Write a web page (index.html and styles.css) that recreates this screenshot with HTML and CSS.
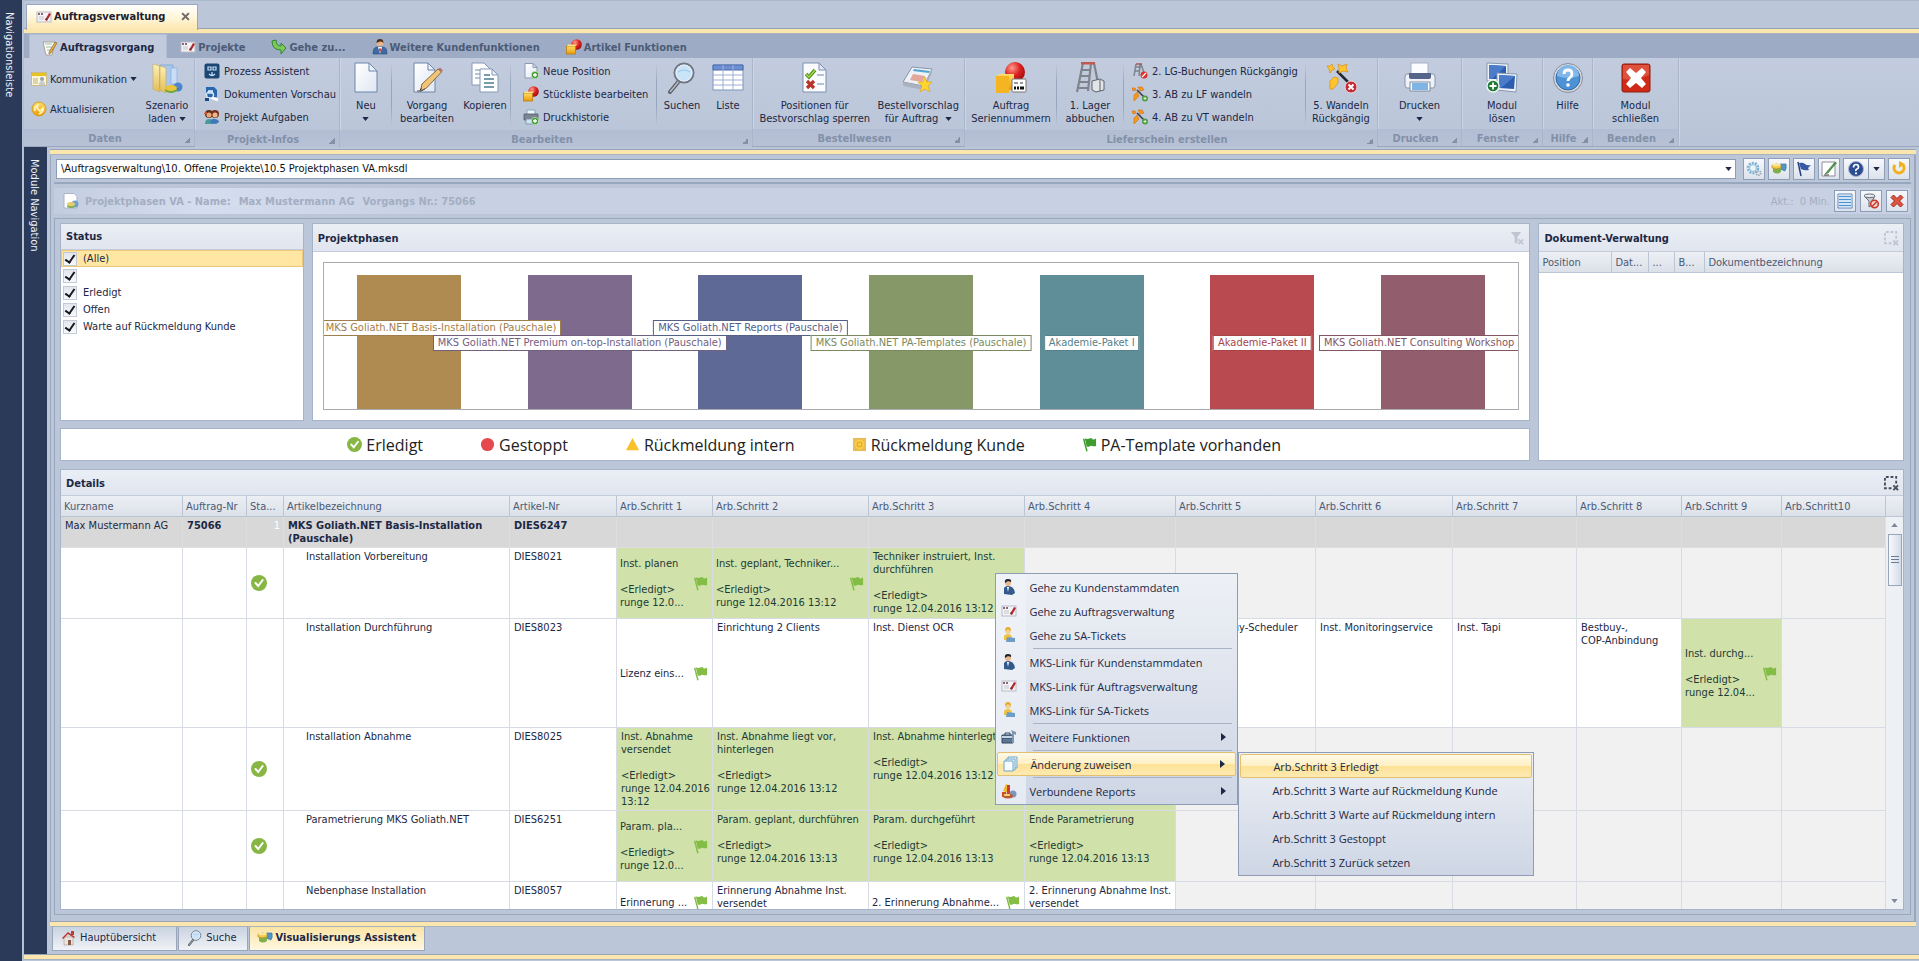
FILE: index.html
```html
<!doctype html>
<html lang="de">
  <head>
    <meta charset="UTF-8" />
    <title>Auftragsverwaltung</title>
    <link rel="stylesheet" href="styles.css">
  </head>
  <body>
    <svg class="sprite" aria-hidden="true">
      <defs>
        <linearGradient id="gold" x1="0" y1="0" x2="0" y2="1"><stop offset="0" stop-color="#ffdf6a" /><stop offset="1" stop-color="#eb9a06" /></linearGradient>
        <linearGradient id="paper" x1="0" y1="0" x2="1" y2="1"><stop offset="0" stop-color="#fff" /><stop offset="1" stop-color="#dfe7f3" /></linearGradient>
        <linearGradient id="folder" x1="0" y1="0" x2="0" y2="1"><stop offset="0" stop-color="#fdf0b4" /><stop offset="1" stop-color="#e2bd58" /></linearGradient>
        <radialGradient id="ball" cx=".35" cy=".3" r=".8"><stop offset="0" stop-color="#ff9a8a" /><stop offset=".5" stop-color="#dc2222" /><stop offset="1" stop-color="#9c0a0a" /></radialGradient>
      </defs>

      <symbol id="i-card" viewBox="0 0 16 16">
        <rect x="1" y="3" width="14" height="10" fill="#f4f4f6" stroke="#b9bcc6" />
        <path d="M2 4h2v2H2zM5 4h2v2H5z" fill="#8a6a72" /><path d="M3 8h5M3 10h5" stroke="#c2c5d0" />
        <path d="M9 11l4-7 2 1-4 7z" fill="#b3262b" /><path d="M9 11l1-2 1 1z" fill="#333" />
      </symbol>
      <symbol id="i-edit" viewBox="0 0 16 16">
        <path d="M1 2l12 0-3 13-6 0z" fill="#fff" stroke="#a9a38c" /><path d="M3 4h7M4 7h6M5 10h4" stroke="#9bb8a0" />
        <path d="M7 12l6-10 2 1-6 10-2 1z" fill="#e6a93a" stroke="#7a6330" stroke-width=".6" />
      </symbol>
      <symbol id="i-goto" viewBox="0 0 16 16">
        <path d="M1 2l4-1q0 6 5 6V4l5 5-5 6v-4Q1 11 1 2z" fill="#7cc95a" stroke="#2f8a2c" />
      </symbol>
      <symbol id="i-person" viewBox="0 0 16 16">
        <circle cx="8" cy="4" r="3.400" fill="#e9b48a" /><path d="M4.500 4q0-4 3.500-4t3.500 4Q10 2 8 2.500T4.500 4z" fill="#4a2c1c" />
        <path d="M1 15q0-7 4-7h6q4 0 4 7z" fill="#3d6aa5" stroke="#274a7c" stroke-width=".6" /><path d="M6 8h4l-2 7z" fill="#fff" /><path d="M8 8.500l1 2-1 4-1-4z" fill="#c52a2a" />
      </symbol>
      <symbol id="i-shapes" viewBox="0 0 16 16">
        <circle cx="10.500" cy="5.500" r="5.300" fill="url(#ball)" /><rect x=".5" y="7" width="9" height="8" fill="url(#gold)" stroke="#b97d0c" stroke-width=".8" />
        <path d="M.5 7l2-1.500h9L9.500 7z" fill="#ffe48b" />
      </symbol>
      <symbol id="i-mail" viewBox="0 0 16 16">
        <rect x=".5" y="1.500" width="15" height="13" fill="#fdf7d5" stroke="#b9a35a" stroke-width=".6" /><rect x="1" y="2" width="14" height="3" fill="#e8c223" />
        <path d="M2 8h5M2 10h5M2 12h5" stroke="#b7b190" /><circle cx="11" cy="8" r="2" fill="#9aa0ad" /><path d="M8 14q0-4 3-4t3 4z" fill="#c7cbd4" />
      </symbol>
      <symbol id="i-refresh" viewBox="0 0 16 16">
        <circle cx="8" cy="8" r="7" fill="url(#gold)" stroke="#d2a31a" /><path d="M4 10q-1-5 3-6L6 7l3 3 3-3q1 4-4 6" fill="none" stroke="#fff6c8" stroke-width="1.600" />
      </symbol>
      <symbol id="i-scenario" viewBox="0 0 32 32">
        <path d="M2 2l7 2v26l-7-3z" fill="url(#folder)" stroke="#c9a94d" stroke-width=".6" /><path d="M9 3h13v24H9z" fill="#a8c8ee" stroke="#6f98cc" stroke-width=".6" />
        <path d="M9 4l6 2v25l-6-3z" fill="url(#folder)" stroke="#c9a94d" stroke-width=".6" /><path d="M20 6h6v16h-6z" fill="#c9ddf5" stroke="#86a9d8" stroke-width=".6" />
        <circle cx="27" cy="25" r="4.500" fill="#4d86cf" /><path d="M22 21a8 5 0 0 0 8 6h-8z" fill="#2d5fae" /><ellipse cx="20" cy="28" rx="6" ry="3" fill="#6cab3a" /><ellipse cx="20" cy="26" rx="6" ry="3" fill="#eac53c" />
      </symbol>
      <symbol id="i-process" viewBox="0 0 16 16">
        <rect x=".5" y=".5" width="15" height="15" rx="2" fill="#1d4673" /><path d="M4 4h3v3H4zM9 4h3v3H9zM8 9v3M5 11q3 3 6 0" fill="none" stroke="#c5e2fa" stroke-width="1.200" />
      </symbol>
      <symbol id="i-preview" viewBox="0 0 16 16">
        <path d="M2 1h8l3 3v7H2z" fill="#2a66ab" /><path d="M4 4h5v4H4z" fill="#a9cdf0" /><circle cx="6" cy="9" r="3.500" fill="none" stroke="#dce9f7" stroke-width="1.500" /><path d="M8 12l6 2" stroke="#fff" stroke-width="2.500" /><path d="M1 12h4v3H1z" fill="#184a83" />
      </symbol>
      <symbol id="i-tasks" viewBox="0 0 16 16">
        <circle cx="5" cy="5" r="4" fill="#5d3019" /><circle cx="11" cy="5" r="4" fill="#7b2e1b" /><circle cx="5" cy="6" r="2.500" fill="#e8a97a" /><circle cx="11" cy="6" r="2.500" fill="#eab88f" />
        <path d="M1 15q0-5 4-5t5 5z" fill="#4a9a9c" /><path d="M6 14q1-5 5-4t4 3l-3 2z" fill="#3c78b5" /><path d="M0 4l3-1v2H0z" fill="#d3572a" />
      </symbol>
      <symbol id="i-page" viewBox="0 0 32 32">
        <path d="M5 1h14l8 8v21H5z" fill="url(#paper)" stroke="#6d86ab" /><path d="M19 1v8h8z" fill="#e9f0fa" stroke="#6d86ab" />
      </symbol>
      <symbol id="i-pageedit" viewBox="0 0 32 32">
        <path d="M3 1h14l7 7v22H3z" fill="url(#paper)" stroke="#6d86ab" /><path d="M17 1v7h7z" fill="#e9f0fa" stroke="#6d86ab" />
        <path d="M11 22L27 7l3.500 3-15 16-6 3z" fill="#efc57a" stroke="#8c6a3a" /><path d="M27 7l2-1.500 3 3-1.500 1.500z" fill="#b9736a" /><path d="M8 29l2-1 1-3z" fill="#333" /><path d="M6 29q4 1 8-2" fill="none" stroke="#555" />
      </symbol>
      <symbol id="i-copy" viewBox="0 0 32 32">
        <path d="M3 1h12l6 6v16H3z" fill="#fff" stroke="#8698b5" /><path d="M6 8h9M6 12h9M6 16h9" stroke="#6b93a4" />
        <path d="M11 7h12l6 6v17H11z" fill="#fff" stroke="#8698b5" /><path d="M23 7v6h6z" fill="#e9f0fa" stroke="#8698b5" /><path d="M15 13h6M15 17h10M15 21h10M15 25h10" stroke="#4b7d93" stroke-width="1.400" />
      </symbol>
      <symbol id="i-newpos" viewBox="0 0 16 16">
        <path d="M2 .5h8l4 4V15H2z" fill="url(#paper)" stroke="#8a9ab3" /><path d="M10 .5v4h4z" fill="#dfe6f0" stroke="#8a9ab3" />
        <circle cx="12" cy="12" r="3.700" fill="#3f9a2f" stroke="#e8f5e2" stroke-width=".6" /><path d="M12 10v4M10 12h4" stroke="#fff" stroke-width="1.300" />
      </symbol>
      <symbol id="i-history" viewBox="0 0 16 16">
        <path d="M4 1h8v5H4z" fill="#eef6fc" stroke="#6f9cc0" stroke-width=".8" /><path d="M1 5h14v6H1z" fill="#7c8594" stroke="#525b6b" stroke-width=".8" /><path d="M3 10h9v5H3z" fill="#cfe3f3" stroke="#6f8ba5" stroke-width=".8" />
        <circle cx="12" cy="12" r="3.700" fill="#3f9a2f" stroke="#e8f5e2" stroke-width=".6" /><path d="M12 10v4M10 12h4" stroke="#fff" stroke-width="1.300" />
      </symbol>
      <symbol id="i-search" viewBox="0 0 32 32">
        <path d="M13 19L4 30" stroke="#5b5f68" stroke-width="4" stroke-linecap="round" /><path d="M13 19L4 30" stroke="#b8bcc6" stroke-width="1.500" /><circle cx="18" cy="11" r="9.500" fill="#c9e3f8" stroke="#6f7683" stroke-width="2" /><circle cx="18" cy="11" r="8" fill="none" stroke="#e9eef5" stroke-width="1.200" /><path d="M12 10q6-4 12 0" stroke="#93c9ee" fill="none" />
      </symbol>
      <symbol id="i-list" viewBox="0 0 32 32">
        <path d="M1 3h30v25H1z" fill="#fff" stroke="#7d92bd" /><path d="M1 3h30v5H1z" fill="#6f8fd4" stroke="#4b6ab0" /><path d="M1 13h30M1 18h30M1 23h30M11 3v25M21 3v25" stroke="#9db0d3" />
      </symbol>
      <symbol id="i-check-doc" viewBox="0 0 32 32">
        <path d="M4 1h16l7 7v22H4z" fill="#f9fbff" stroke="#7d8fae" /><path d="M20 1v7h7z" fill="#dfe8f5" stroke="#7d8fae" /><path d="M18 13h7M18 22h7" stroke="#6f87b0" />
        <path d="M7 12l3 3 6-7" fill="none" stroke="#4f8d1a" stroke-width="3.500" /><path d="M7 12l3 3 6-7" fill="none" stroke="#a2d84e" stroke-width="1.500" /><path d="M8 19l7 7M15 19l-7 7" stroke="#b8342a" stroke-width="3.200" />
      </symbol>
      <symbol id="i-order" viewBox="0 0 32 32">
        <path d="M10 5l20 2-8 17L1 20z" fill="#eef1f6" stroke="#8b94a5" /><path d="M1 20l21 4 8-17v4l-8 17L1 24z" fill="#aab2c0" /><path d="M12 7l16 2-1 2-16-2z" fill="#52a5d4" /><path d="M11 12l12 2-3 6-12-2z" fill="#e4a79c" />
        <path d="M23 15l2 5 5 0-4 4 2 6-5-3-5 3 2-6-4-4 5 0z" fill="#ffd52e" stroke="#e39d11" stroke-width=".6" />
      </symbol>
      <symbol id="i-serial" viewBox="0 0 32 32">
        <circle cx="20" cy="10" r="10" fill="url(#ball)" /><path d="M1 14l4-2h14v16H1z" fill="url(#gold)" /><path d="M1 14h13v17H1z" fill="#f5b523" />
        <rect x="17" y="17" width="14" height="13" rx="1" fill="#fff" stroke="#777" /><path d="M19 21h4M25 21h3" stroke="#333" /><path d="M19 26h2M22 26h2M25 26h4" stroke="#111" stroke-width="3" />
      </symbol>
      <symbol id="i-ladder" viewBox="0 0 32 32">
        <path d="M9 1L3 30M17 1l-3 28M9 1h12M8 8h8M7 14h8M6 20h9M5 26h9M20 1l5 25" fill="none" stroke="#7f838b" stroke-width="2.200" /><path d="M7 1h14" stroke="#c05a50" stroke-width="3" />
        <path d="M18 19l8-2 4 2v9l-8 2-4-2z" fill="#e2e4e8" stroke="#5d626c" /><path d="M26 18v11" stroke="#5d626c" />
      </symbol>
      <symbol id="i-ladder-no" viewBox="0 0 16 16">
        <path d="M4 1L2 13M8 1L7 13M4 4h5M3 8h5M9 1l3 9" fill="none" stroke="#7f838b" stroke-width="1.500" /><path d="M4 1h6" stroke="#a05a58" stroke-width="1.500" />
        <circle cx="12" cy="12" r="3.500" fill="#d8322c" /><path d="M10 14l4-4" stroke="#fff" stroke-width="1.300" />
      </symbol>
      <symbol id="i-wand" viewBox="0 0 16 16">
        <path d="M5 4l8 8" stroke="#3b3b45" stroke-width="1.600" /><path d="M6 1l4 0 2 3-4 1zM0 2l3 0 1 2-3 1zM2 9l3-3 2 4-5 5z" fill="#f39a1c" stroke="#cf6d10" stroke-width=".6" /><circle cx="13" cy="12.500" r="3" fill="#4f9d43" /><path d="M11.500 12.500h3M13 11v3" stroke="#d9f0d2" />
      </symbol>
      <symbol id="i-wand-undo" viewBox="0 0 32 32">
        <path d="M12 9l14 14" stroke="#25252d" stroke-width="2.500" /><path d="M2 4l3 0 2-2 1 3 2 2-3 1-2 3-1-4zM13 2l4 2 5-2-1 4 2 4-5-1-4 2 0-5zM5 19l4-4 4 1 0 5-5 6-3 0 0-4z" fill="#ffc52b" stroke="#d98e12" stroke-width=".7" />
        <circle cx="26" cy="25" r="6" fill="#c52a36" stroke="#f0dada" /><path d="M23.500 22.500l5 5M28.500 22.500l-5 5" stroke="#fff" stroke-width="2" />
      </symbol>
      <symbol id="i-printer" viewBox="0 0 32 32">
        <path d="M3 12h26q2 0 2 3v8q0 3-2 3H3q-2 0-2-3v-8q0-3 2-3z" fill="#eef1f7" stroke="#8b95a8" /><path d="M7 1h17v12H7z" fill="#fafcff" stroke="#a7b0c2" /><path d="M5 11h22v4q0 2-3 2H8q-3 0-3-2z" fill="#55658a" /><path d="M6 20h20v9H6z" fill="#fff" stroke="#7f8aa0" /><path d="M8 21h16v7H8z" fill="#7eb5e4" />
      </symbol>
      <symbol id="i-window" viewBox="0 0 32 32">
        <path d="M1 1l21 1v17H1z" fill="#eef3fa" stroke="#8797b0" /><path d="M3 3l17 1v13H3z" fill="#2a5cb0" /><path d="M3 3l17 1-14 13H3z" fill="#4a7cca" /><path d="M11 11l20 1-1 18-19-2z" fill="#eef3fa" stroke="#8797b0" /><path d="M13 13l16 1-1 13-15-1z" fill="#2a5cb0" /><path d="M13 13l16 1-14 12h-2z" fill="#4a7cca" />
        <circle cx="7" cy="24" r="6" fill="#1f7a33" stroke="#f2faf2" stroke-width="1.300" /><path d="M7 20.500v7M3.500 24h7" stroke="#fff" stroke-width="1.800" />
      </symbol>
      <symbol id="i-help" viewBox="0 0 32 32">
        <circle cx="16" cy="16" r="14.500" fill="#d6d9de" stroke="#868c97" /><circle cx="16" cy="16" r="12" fill="#4e92d6" stroke="#2e67a8" /><path d="M5 14a11 11 0 0 1 22 0q-11 4-22 0z" fill="#82b7ea" />
        <path d="M12 12q0-4 4-4t4 4q0 2-2 3.500T16 19" fill="none" stroke="#fff" stroke-width="2.800" /><circle cx="16" cy="23" r="1.800" fill="#fff" />
      </symbol>
      <symbol id="i-close" viewBox="0 0 32 32">
        <rect x="2" y="2" width="28" height="28" rx="2" fill="#cf2a17" stroke="#8e1c10" /><path d="M3 3h26v10q-14 6-26 4z" fill="#e4634e" opacity=".7" /><path d="M10 6l6 5 6-5 4 4-5 6 5 6-4 4-6-5-6 5-4-4 5-6-5-6z" fill="#fff" />
      </symbol>
      <symbol id="i-gear" viewBox="0 0 16 16">
        <circle cx="7" cy="7" r="5" fill="none" stroke="#7fb3d4" stroke-width="2.600" stroke-dasharray="2 1.100" /><circle cx="7" cy="7" r="3.500" fill="#e8f3fa" stroke="#8cbcd8" /><circle cx="12.500" cy="12" r="2.200" fill="none" stroke="#9aa8b8" stroke-width="1.800" stroke-dasharray="1.300 .8" />
      </symbol>
      <symbol id="i-visual" viewBox="0 0 16 16">
        <path d="M9 3h6q1 4-1 7l-5-2z" fill="#4f95c7" stroke="#2e6f9f" stroke-width=".6" /><path d="M2 7v4q4 3 8 0V7z" fill="#7fb04c" /><path d="M1 4q5-2 9 0v3q-5 2-9 0z" fill="#f2c94a" stroke="#ab8521" stroke-width=".6" /><ellipse cx="5.500" cy="4" rx="4.500" ry="1.200" fill="#fbe79a" />
      </symbol>
      <symbol id="i-flagblue" viewBox="0 0 16 16">
        <path d="M2 1l3 14" stroke="#27407c" stroke-width="1.500" /><path d="M3 2q4-1 6 1t6 1l-3 3 1 2q-4 1-8-1z" fill="#3859a6" />
      </symbol>
      <symbol id="i-note" viewBox="0 0 16 16">
        <path d="M1 1h13v14H1z" fill="#fff" stroke="#8b8f99" /><path d="M4 13L14 1l1.500 1L7 12z" fill="#4f9a4a" stroke="#2e6a30" stroke-width=".5" /><path d="M3 14h5" stroke="#444" />
      </symbol>
      <symbol id="i-question" viewBox="0 0 16 16">
        <circle cx="8" cy="8" r="7.500" fill="#2c4c93" stroke="#aab4c9" /><path d="M5.500 6.500q0-3 2.500-3t2.500 2.500q0 1.500-1.500 2T8 10" fill="none" stroke="#fff" stroke-width="1.700" /><circle cx="8" cy="12.300" r="1.100" fill="#fff" />
      </symbol>
      <symbol id="i-reload" viewBox="0 0 16 16">
        <path d="M4 4a5 5 0 1 0 8 0" fill="none" stroke="#f2b01e" stroke-width="3" /><path d="M8 0v7l6-4z" fill="#f2b01e" />
      </symbol>
      <symbol id="i-report" viewBox="0 0 16 16">
        <path d="M1 .5h10l3 3V15H1z" fill="#fff" stroke="#aab3c3" /><circle cx="12" cy="11" r="3.500" fill="#6e9fd4" /><ellipse cx="8" cy="13" rx="4" ry="2" fill="#82b05a" /><ellipse cx="8" cy="11" rx="4" ry="2" fill="#e4cd6a" />
      </symbol>
      <symbol id="i-rows" viewBox="0 0 16 16">
        <path d="M1 1h14v14H1z" fill="#fff" stroke="#5a86bd" /><path d="M2 3.500h12M2 6.500h12M2 9.500h12M2 12.500h12" stroke="#4f92d2" stroke-width="1.700" />
      </symbol>
      <symbol id="i-nofilter" viewBox="0 0 16 16">
        <path d="M1 3l5 5v6l3-2V8l3-5z" fill="#c6cad0" stroke="#666c78" /><ellipse cx="6.500" cy="2.800" rx="5.500" ry="1.800" fill="#eceef2" stroke="#666c78" /><circle cx="11.500" cy="11" r="3.800" fill="#f6d0ca" stroke="#c8362a" stroke-width="1.500" /><path d="M9 13.500l5-5" stroke="#c8362a" stroke-width="1.500" />
      </symbol>
      <symbol id="i-redx" viewBox="0 0 16 16">
        <path d="M4.500 2L8 5.500 11.500 2 14 4.500 10.500 8l3.500 3.500-2.500 2.500L8 10.500 4.500 14 2 11.500 5.500 8 2 4.500z" fill="#e0533f" stroke="#9c2a1d" />
      </symbol>
      <symbol id="i-x" viewBox="0 0 16 16"><path d="M2 2l12 12M14 2L2 14" stroke="currentColor" stroke-width="3.600" /></symbol>
      <symbol id="i-funnel" viewBox="0 0 16 16"><path d="M1 1h11L8 6v7H5V6z" fill="currentColor" /><path d="M9 9l5 5M14 9l-5 5" stroke="currentColor" stroke-width="1.800" /></symbol>
      <symbol id="i-select" viewBox="0 0 16 16"><path d="M8 13H1V1h12v7" fill="none" stroke="currentColor" stroke-width="2" stroke-dasharray="3 2" /><path d="M10 10l5 5M15 10l-5 5" stroke="currentColor" stroke-width="2" /></symbol>
      <symbol id="i-down" viewBox="0 0 8 5"><path d="M0 0h8L4 5z" fill="currentColor" /></symbol>
      <symbol id="i-up" viewBox="0 0 8 5"><path d="M0 5h8L4 0z" fill="currentColor" /></symbol>
      <symbol id="i-right" viewBox="0 0 5 8"><path d="M0 0v8l5-4z" fill="currentColor" /></symbol>
      <symbol id="i-done" viewBox="0 0 16 16"><circle cx="8" cy="8" r="8" fill="#87b644" /><path d="M4.500 8l2.700 3 4.500-6" fill="none" stroke="#fff" stroke-width="2" stroke-linecap="round" /></symbol>
      <symbol id="i-stop" viewBox="0 0 16 16"><circle cx="8" cy="8" r="7" fill="#e5484d" /></symbol>
      <symbol id="i-warn" viewBox="0 0 16 16"><path d="M8 1l7 13H1z" fill="#f8c02a" /></symbol>
      <symbol id="i-customer" viewBox="0 0 16 16"><path d="M1 1h14v14H1z" fill="#e9bd55" /><circle cx="8" cy="8" r="5" fill="#fbd23f" /><circle cx="8" cy="8" r="2.500" fill="none" stroke="#e8a83c" stroke-width="1.500" /></symbol>
      <symbol id="i-flag" viewBox="0 0 16 16"><path d="M1 2l1.500-.5L6 15l-1.500.5z" fill="currentColor" /><path d="M3 1.500q3 1 5 0t3 .5 4-.5v8q-2 .5-4 0t-3 .5-3 0z" fill="currentColor" /></symbol>
      <symbol id="i-user" viewBox="0 0 16 16"><circle cx="7" cy="4" r="3" fill="#e8b78e" /><path d="M4 4q-1-4 3-4t3 3L7 2z" fill="#1f2530" /><path d="M3 15V9q1-2 4-2 6 0 7 7l-3 2z" fill="#31598c" /><path d="M6 8h2l-1 5z" fill="#fff" /></symbol>
      <symbol id="i-support" viewBox="0 0 16 16"><circle cx="7" cy="4" r="2.800" fill="#f1cf8e" /><path d="M4 4q0-4 3-4t3 4L7 2z" fill="#e7a91e" /><path d="M3 13V9q1-2 4-2 3 0 4 3v4z" fill="#f0c244" /><path d="M6 10l8 1v4H5z" fill="#6c9dc8" /></symbol>
      <symbol id="i-tools" viewBox="0 0 16 16"><path d="M1 6h11v8H1z" fill="#5c7794" stroke="#33475e" /><path d="M4 6V4h5v2M1 9h11" fill="none" stroke="#33475e" /><path d="M1 7h11v2H1z" fill="#c4d3e2" /><path d="M10 1l5 2v3l-2-1v9h-2V4z" fill="#7f98b2" /></symbol>
      <symbol id="i-stack" viewBox="0 0 16 16"><path d="M6 1h9v11H6z" fill="#eaf4fb" stroke="#6fa6c9" /><path d="M4 3h9v11H4z" fill="#eaf4fb" stroke="#6fa6c9" /><path d="M2 5h9v10H2z" fill="#f7fbfe" stroke="#6fa6c9" /></symbol>
      <symbol id="i-chart" viewBox="0 0 16 16"><path d="M2 8l3-7 2 1v8z" fill="#f0b72c" /><path d="M6 2h3v9H6z" fill="#d13b2e" /><circle cx="12" cy="11" r="3.500" fill="#7f95b8" /><path d="M1 9h4v5H1z" fill="#cf4a2e" /><ellipse cx="7" cy="13" rx="5" ry="2.500" fill="#b55a3a" /><path d="M3 11h6v2H3z" fill="#f3cf65" /></symbol>
      <symbol id="i-home" viewBox="0 0 16 16"><path d="M3 7h9v8H3z" fill="#e9e4e0" stroke="#a79a92" stroke-width=".6" /><path d="M1 8l6-6 7 5-1 1-6-4-5 5z" fill="#c0332c" /><path d="M10 1h3v4h-3z" fill="#b5442f" /><path d="M7 10h3v5H7z" fill="#8a5a44" /></symbol>
    </svg>

    <div class="app">
      <aside class="side-strip nav-strip">Navigationsleiste</aside>

      <div class="workspace">
        <header class="doc-tabs">
          <div class="doc-tab">
            <svg class="ico"><use href="#i-card" /></svg>
            <span>Auftragsverwaltung</span>
            <button class="doc-close" aria-label="Schließen"><svg><use href="#i-x" /></svg></button>
          </div>
        </header>
        <div class="accent"></div>

        <nav class="ribbon-tabs">
          <button class="ribbon-tab active"><svg class="ico"><use href="#i-edit" /></svg>Auftragsvorgang</button>
          <button class="ribbon-tab"><svg class="ico"><use href="#i-card" /></svg>Projekte</button>
          <button class="ribbon-tab"><svg class="ico"><use href="#i-goto" /></svg>Gehe zu...</button>
          <button class="ribbon-tab"><svg class="ico"><use href="#i-person" /></svg>Weitere Kundenfunktionen</button>
          <button class="ribbon-tab"><svg class="ico"><use href="#i-shapes" /></svg>Artikel Funktionen</button>
        </nav>

        <div class="ribbon">
          <section class="group g-daten">
            <div class="group-body">
              <div class="stack two">
                <button class="small"><svg class="ico"><use href="#i-mail" /></svg>Kommunikation <svg class="caret"><use href="#i-down" /></svg></button>
                <button class="small"><svg class="ico"><use href="#i-refresh" /></svg>Aktualisieren</button>
              </div>
              <button class="big"><svg class="ico-big"><use href="#i-scenario" /></svg><span>Szenario<br>laden <svg class="caret"><use href="#i-down" /></svg></span></button>
            </div>
            <h3 class="group-title">Daten</h3>
          </section>
          <section class="group g-infos">
            <div class="group-body">
              <div class="stack">
                <button class="small"><svg class="ico"><use href="#i-process" /></svg>Prozess Assistent</button>
                <button class="small"><svg class="ico"><use href="#i-preview" /></svg>Dokumenten Vorschau</button>
                <button class="small"><svg class="ico"><use href="#i-tasks" /></svg>Projekt Aufgaben</button>
              </div>
            </div>
            <h3 class="group-title">Projekt-Infos</h3>
          </section>
          <section class="group g-bearbeiten">
            <div class="group-body">
              <button class="big w48"><svg class="ico-big"><use href="#i-page" /></svg><span>Neu<br><svg class="caret"><use href="#i-down" /></svg></span></button>
              <i class="divider"></i>
              <button class="big w68"><svg class="ico-big"><use href="#i-pageedit" /></svg><span>Vorgang<br>bearbeiten</span></button>
              <button class="big w48"><svg class="ico-big"><use href="#i-copy" /></svg><span>Kopieren</span></button>
              <i class="divider"></i>
              <div class="stack">
                <button class="small"><svg class="ico"><use href="#i-newpos" /></svg>Neue Position</button>
                <button class="small"><svg class="ico"><use href="#i-shapes" /></svg>Stückliste bearbeiten</button>
                <button class="small"><svg class="ico"><use href="#i-history" /></svg>Druckhistorie</button>
              </div>
              <i class="divider"></i>
              <button class="big w48"><svg class="ico-big"><use href="#i-search" /></svg><span>Suchen</span></button>
              <button class="big"><svg class="ico-big"><use href="#i-list" /></svg><span>Liste</span></button>
            </div>
            <h3 class="group-title">Bearbeiten</h3>
          </section>
          <section class="group g-bestell">
            <div class="group-body">
              <button class="big w120"><svg class="ico-big"><use href="#i-check-doc" /></svg><span>Positionen für<br>Bestvorschlag sperren</span></button>
              <button class="big w88"><svg class="ico-big"><use href="#i-order" /></svg><span>Bestellvorschlag<br>für Auftrag &nbsp;<svg class="caret"><use href="#i-down" /></svg></span></button>
            </div>
            <h3 class="group-title">Bestellwesen</h3>
          </section>
          <section class="group g-liefer">
            <div class="group-body">
              <button class="big w88"><svg class="ico-big"><use href="#i-serial" /></svg><span>Auftrag<br>Seriennummern</span></button>
              <i class="divider"></i>
              <button class="big w64"><svg class="ico-big"><use href="#i-ladder" /></svg><span>1. Lager<br>abbuchen</span></button>
              <i class="divider"></i>
              <div class="stack">
                <button class="small"><svg class="ico"><use href="#i-ladder-no" /></svg>2. LG-Buchungen Rückgängig</button>
                <button class="small"><svg class="ico"><use href="#i-wand" /></svg>3. AB zu LF wandeln</button>
                <button class="small"><svg class="ico"><use href="#i-wand" /></svg>4. AB zu VT wandeln</button>
              </div>
              <i class="divider"></i>
              <button class="big w68"><svg class="ico-big"><use href="#i-wand-undo" /></svg><span>5. Wandeln<br>Rückgängig</span></button>
            </div>
            <h3 class="group-title">Lieferschein erstellen</h3>
          </section>
          <section class="group g-drucken">
            <div class="group-body center">
              <button class="big"><svg class="ico-big"><use href="#i-printer" /></svg><span>Drucken<br><svg class="caret"><use href="#i-down" /></svg></span></button>
            </div>
            <h3 class="group-title">Drucken</h3>
          </section>
          <section class="group g-fenster">
            <div class="group-body center">
              <button class="big"><svg class="ico-big"><use href="#i-window" /></svg><span>Modul<br>lösen</span></button>
            </div>
            <h3 class="group-title">Fenster</h3>
          </section>
          <section class="group g-hilfe">
            <div class="group-body center">
              <button class="big"><svg class="ico-big"><use href="#i-help" /></svg><span>Hilfe</span></button>
            </div>
            <h3 class="group-title">Hilfe</h3>
          </section>
          <section class="group g-beenden">
            <div class="group-body center">
              <button class="big"><svg class="ico-big"><use href="#i-close" /></svg><span>Modul<br>schließen</span></button>
            </div>
            <h3 class="group-title">Beenden</h3>
          </section>
        </div>

        <div class="module">
          <aside class="side-strip module-strip">Module Navigation</aside>
          <div class="module-main">
            <div class="accent"></div>
            <div class="module-frame">
              <div class="toolbar">
                <div class="path-box">
                  <select class="path-select" aria-label="Pfad">
                    <option>\Auftragsverwaltung\10. Offene Projekte\10.5 Projektphasen VA.mksdl</option>
                  </select>
                  <svg class="caret"><use href="#i-down" /></svg>
                </div>
                <button class="tool" aria-label="Einstellungen"><svg class="ico"><use href="#i-gear" /></svg></button>
                <button class="tool" aria-label="Visualisierung"><svg class="ico"><use href="#i-visual" /></svg></button>
                <button class="tool" aria-label="Markieren"><svg class="ico"><use href="#i-flagblue" /></svg></button>
                <button class="tool" aria-label="Notiz"><svg class="ico"><use href="#i-note" /></svg></button>
                <div class="tool-split">
                  <button class="tool" aria-label="Hilfe"><svg class="ico"><use href="#i-question" /></svg></button>
                  <button class="tool narrow" aria-label="Mehr"><svg class="caret"><use href="#i-down" /></svg></button>
                </div>
                <button class="tool" aria-label="Neu laden"><svg class="ico"><use href="#i-reload" /></svg></button>
              </div>

              <div class="title-row">
                <svg class="ico"><use href="#i-report" /></svg>
                <h1>Projektphasen VA - Name:</h1>
                <strong>Max Mustermann AG</strong>
                <strong>Vorgangs Nr.: 75066</strong>
                <span class="timer">Akt.:&nbsp; 0 Min.</span>
                <button class="tool" aria-label="Ansicht"><svg class="ico"><use href="#i-rows" /></svg></button>
                <button class="tool" aria-label="Filter löschen"><svg class="ico"><use href="#i-nofilter" /></svg></button>
                <button class="tool" aria-label="Ansicht schließen"><svg class="ico"><use href="#i-redx" /></svg></button>
              </div>

              <main class="content">
                <div class="overview">
                  <section class="panel">
                    <h2 class="panel-title slim">Status</h2>
                    <div class="status-list">
                      <label class="status-item selected"><input type="checkbox" checked>(Alle)</label>
                      <label class="status-item"><input type="checkbox" checked aria-label="Leer"></label>
                      <label class="status-item"><input type="checkbox" checked>Erledigt</label>
                      <label class="status-item"><input type="checkbox" checked>Offen</label>
                      <label class="status-item"><input type="checkbox" checked>Warte auf Rückmeldung Kunde</label>
                    </div>
                  </section>

                  <section class="panel">
                    <h2 class="panel-title">Projektphasen <svg class="panel-ico muted"><use href="#i-funnel" /></svg></h2>
                    <div class="chart">
                      <div class="bar-slot brown"><div class="bar"></div><span class="bar-label high at-start">MKS Goliath.NET Basis-Installation (Pauschale)</span></div>
                      <div class="bar-slot purple"><div class="bar"></div><span class="bar-label">MKS Goliath.NET Premium on-top-Installation (Pauschale)</span></div>
                      <div class="bar-slot indigo"><div class="bar"></div><span class="bar-label high">MKS Goliath.NET Reports (Pauschale)</span></div>
                      <div class="bar-slot green"><div class="bar"></div><span class="bar-label">MKS Goliath.NET PA-Templates (Pauschale)</span></div>
                      <div class="bar-slot teal"><div class="bar"></div><span class="bar-label">Akademie-Paket I</span></div>
                      <div class="bar-slot red"><div class="bar"></div><span class="bar-label">Akademie-Paket II</span></div>
                      <div class="bar-slot plum"><div class="bar"></div><span class="bar-label at-end">MKS Goliath.NET Consulting Workshop</span></div>
                    </div>
                  </section>

                  <section class="panel documents">
                    <h2 class="panel-title">Dokument-Verwaltung <svg class="panel-ico muted"><use href="#i-select" /></svg></h2>
                    <table class="doc-table">
                      <colgroup><col class="d-pos"><col class="d-date"><col class="d-dots"><col class="d-b"><col></colgroup>
                      <thead><tr><th>Position</th><th>Dat...</th><th>...</th><th>B...</th><th>Dokumentbezeichnung</th></tr></thead>
                    </table>
                  </section>

                  <section class="panel legend">
                    <span><svg class="ico"><use href="#i-done" /></svg>Erledigt</span>
                    <span><svg class="ico"><use href="#i-stop" /></svg>Gestoppt</span>
                    <span><svg class="ico"><use href="#i-warn" /></svg>Rückmeldung intern</span>
                    <span><svg class="ico"><use href="#i-customer" /></svg>Rückmeldung Kunde</span>
                    <span><svg class="ico flag-dark"><use href="#i-flag" /></svg>PA-Template vorhanden</span>
                  </section>
                </div>

                <section class="panel details">
                  <h2 class="panel-title">Details <svg class="panel-ico"><use href="#i-select" /></svg></h2>
                  <div class="grid-wrap">
                    <div class="grid-clip">
                      <table class="grid">
                        <colgroup>
                          <col class="c-name"><col class="c-order"><col class="c-state"><col class="c-desc"><col class="c-art">
                          <col class="c-s1"><col class="c-s2"><col class="c-s3"><col class="c-s4"><col class="c-s5">
                          <col class="c-s6"><col class="c-s7"><col class="c-s8"><col class="c-s9"><col class="c-s10">
                        </colgroup>
                        <thead>
                          <tr>
                            <th>Kurzname</th><th>Auftrag-Nr</th><th>Sta...</th><th>Artikelbezeichnung</th><th>Artikel-Nr</th>
                            <th>Arb.Schritt 1</th><th>Arb.Schritt 2</th><th>Arb.Schritt 3</th><th>Arb.Schritt 4</th><th>Arb.Schritt 5</th>
                            <th>Arb.Schritt 6</th><th>Arb.Schritt 7</th><th>Arb.Schritt 8</th><th>Arb.Schritt 9</th><th>Arb.Schritt10</th>
                          </tr>
                        </thead>
                        <tbody>
                          <tr class="order-row">
                            <td>Max Mustermann AG</td><td><b>75066</b></td><td class="count">1</td><td><b>MKS Goliath.NET Basis-Installation (Pauschale)</b></td><td><b>DIES6247</b></td>
                            <td></td><td></td><td></td><td></td><td></td><td></td><td></td><td></td><td></td><td></td>
                          </tr>
                          <tr class="h-mid">
                            <td></td><td></td><td class="state"><svg class="ico"><use href="#i-done" /></svg></td><td class="sub">Installation Vorbereitung</td><td>DIES8021</td>
                            <td class="done mid"><div class="step"><span>Inst. planen<br><br>&lt;Erledigt&gt;<br>runge 12.0...</span><svg class="ico flag"><use href="#i-flag" /></svg></div></td>
                            <td class="done mid"><div class="step"><span>Inst. geplant, Techniker...<br><br>&lt;Erledigt&gt;<br>runge 12.04.2016 13:12</span><svg class="ico flag"><use href="#i-flag" /></svg></div></td>
                            <td class="done">Techniker instruiert, Inst. durchführen<br><br>&lt;Erledigt&gt;<br>runge 12.04.2016 13:12</td>
                            <td class="empty"></td><td class="empty"></td><td class="empty"></td><td class="empty"></td><td class="empty"></td><td class="empty"></td><td class="empty"></td>
                          </tr>
                          <tr class="h-tall">
                            <td></td><td></td><td></td><td class="sub">Installation Durchführung</td><td>DIES8023</td>
                            <td class="mid"><div class="step"><span>Lizenz eins...</span><svg class="ico flag"><use href="#i-flag" /></svg></div></td>
                            <td>Einrichtung 2 Clients</td><td>Inst. Dienst OCR</td><td></td><td>Inst. Bestbuy-Scheduler</td><td>Inst. Monitoringservice</td><td>Inst. Tapi</td><td>Bestbuy-,<br>COP-Anbindung</td>
                            <td class="done mid"><div class="step"><span>Inst. durchg...<br><br>&lt;Erledigt&gt;<br>runge 12.04...</span><svg class="ico flag"><use href="#i-flag" /></svg></div></td>
                            <td class="empty"></td>
                          </tr>
                          <tr class="h-large">
                            <td></td><td></td><td class="state"><svg class="ico"><use href="#i-done" /></svg></td><td class="sub">Installation Abnahme</td><td>DIES8025</td>
                            <td class="done">Inst. Abnahme versendet<br><br>&lt;Erledigt&gt;<br>runge 12.04.2016 13:12</td>
                            <td class="done">Inst. Abnahme liegt vor, hinterlegen<br><br>&lt;Erledigt&gt;<br>runge 12.04.2016 13:12</td>
                            <td class="done">Inst. Abnahme hinterlegt<br><br>&lt;Erledigt&gt;<br>runge 12.04.2016 13:12</td>
                            <td class="done"></td>
                            <td class="empty"></td><td class="empty"></td><td class="empty"></td><td class="empty"></td><td class="empty"></td><td class="empty"></td>
                          </tr>
                          <tr class="h-mid">
                            <td></td><td></td><td class="state"><svg class="ico"><use href="#i-done" /></svg></td><td class="sub">Parametrierung MKS Goliath.NET</td><td>DIES6251</td>
                            <td class="done mid"><div class="step"><span>Param. pla...<br><br>&lt;Erledigt&gt;<br>runge 12.0...</span><svg class="ico flag"><use href="#i-flag" /></svg></div></td>
                            <td class="done">Param. geplant, durchführen<br><br>&lt;Erledigt&gt;<br>runge 12.04.2016 13:13</td>
                            <td class="done">Param. durchgeführt<br><br>&lt;Erledigt&gt;<br>runge 12.04.2016 13:13</td>
                            <td class="done">Ende Parametrierung<br><br>&lt;Erledigt&gt;<br>runge 12.04.2016 13:13</td>
                            <td class="empty"></td><td class="empty"></td><td class="empty"></td><td class="empty"></td><td class="empty"></td><td class="empty"></td>
                          </tr>
                          <tr class="h-last">
                            <td></td><td></td><td></td><td class="sub">Nebenphase Installation</td><td>DIES8057</td>
                            <td class="mid"><div class="step"><span>Erinnerung ...</span><svg class="ico flag"><use href="#i-flag" /></svg></div></td>
                            <td>Erinnerung Abnahme Inst. versendet</td>
                            <td class="mid"><div class="step"><span>2. Erinnerung Abnahme...</span><svg class="ico flag"><use href="#i-flag" /></svg></div></td>
                            <td>2. Erinnerung Abnahme Inst. versendet</td>
                            <td class="empty"></td><td class="empty"></td><td class="empty"></td><td class="empty"></td><td class="empty"></td><td class="empty"></td>
                          </tr>
                        </tbody>
                      </table>
                    </div>
                    <div class="scrollbar">
                      <div class="scroll-head"></div>
                      <svg class="scroll-arrow"><use href="#i-up" /></svg>
                      <div class="thumb"><i></i></div>
                      <svg class="scroll-arrow last"><use href="#i-down" /></svg>
                    </div>
                  </div>

                  <div class="menu context-menu">
                    <button><svg class="ico"><use href="#i-user" /></svg>Gehe zu Kundenstammdaten</button>
                    <button><svg class="ico"><use href="#i-card" /></svg>Gehe zu Auftragsverwaltung</button>
                    <button><svg class="ico"><use href="#i-support" /></svg>Gehe zu SA-Tickets</button>
                    <hr>
                    <button><svg class="ico"><use href="#i-user" /></svg>MKS-Link für Kundenstammdaten</button>
                    <button><svg class="ico"><use href="#i-card" /></svg>MKS-Link für Auftragsverwaltung</button>
                    <button><svg class="ico"><use href="#i-support" /></svg>MKS-Link für SA-Tickets</button>
                    <hr>
                    <button><svg class="ico"><use href="#i-tools" /></svg>Weitere Funktionen<svg class="more"><use href="#i-right" /></svg></button>
                    <hr>
                    <button class="hot"><svg class="ico"><use href="#i-stack" /></svg>Änderung zuweisen<svg class="more"><use href="#i-right" /></svg></button>
                    <hr>
                    <button><svg class="ico"><use href="#i-chart" /></svg>Verbundene Reports<svg class="more"><use href="#i-right" /></svg></button>

                    <div class="menu sub-menu">
                      <button class="hot">Arb.Schritt 3 Erledigt</button>
                      <button>Arb.Schritt 3 Warte auf Rückmeldung Kunde</button>
                      <button>Arb.Schritt 3 Warte auf Rückmeldung intern</button>
                      <button>Arb.Schritt 3 Gestoppt</button>
                      <button>Arb.Schritt 3 Zurück setzen</button>
                    </div>
                  </div>
                </section>
              </main>
            </div>

            <div class="accent"></div>
            <nav class="bottom-tabs">
              <button class="bottom-tab first"><svg class="ico"><use href="#i-home" /></svg>Hauptübersicht</button>
              <button class="bottom-tab"><svg class="ico"><use href="#i-search" /></svg>Suche</button>
              <button class="bottom-tab active"><svg class="ico"><use href="#i-visual" /></svg>Visualisierungs Assistent</button>
            </nav>
          </div>
        </div>
        <div class="accent"></div>
      </div>
    </div>
  </body>
</html>
```
FILE: styles.css
```css
:root {
  --chrome: #bcc6d9;
  --line: #98a7be;
  --navy: #2b3a59;
  --ink: #1c2845;
  --accent: #fbe6ad;
}

* {
  box-sizing: border-box;
}

body {
  margin: 0;
  background: var(--chrome);
  color: var(--ink);
  font-family: "DejaVu Sans Condensed", "DejaVu Sans", sans-serif;
  font-size: 11px;
  line-height: 13px;
}

button {
  font: inherit;
  color: inherit;
  border: none;
  background: none;
  padding: 0;
  cursor: pointer;
}

h1,
h2,
h3 {
  margin: 0;
  font-size: 11px;
}

svg {
  display: block;
  flex: none;
}

.sprite {
  position: absolute;
  width: 0;
  height: 0;
}

.ico {
  width: 16px;
  height: 16px;
}

.ico-big {
  width: 32px;
  height: 32px;
}

.caret {
  display: inline-block;
  width: 7px;
  height: 4px;
  vertical-align: middle;
}

.app {
  display: flex;
  height: 100vh;
  overflow: hidden;
}

.side-strip {
  flex: none;
  writing-mode: vertical-rl;
  background: var(--navy);
  color: #f1f4f9;
}

.nav-strip {
  width: 24px;
  padding: 12px 6px;
  border-right: 2px solid #b4c2d6;
}

.workspace {
  flex: 1;
  min-width: 0;
  display: flex;
  flex-direction: column;
  padding-bottom: 1px;
}

.accent {
  flex: none;
  height: 6px;
  background: var(--accent);
  border-top: 1px solid #97a4b8;
  border-bottom: 1px solid #a9b2bf;
}

/* document tabs */
.doc-tabs {
  height: 28px;
  padding: 3px 2px 0;
  border-top: 1px solid #aab8cc;
}

.doc-tab {
  display: flex;
  align-items: center;
  gap: 2px;
  width: 172px;
  height: 26px;
  padding: 0 7px 2px 9px;
  border: 1px solid #98a7be;
  border-bottom: none;
  background: linear-gradient(#fff, #fff6da 50%, #fbe6ad);
  font-weight: bold;
  color: #1c2030;
  position: relative;
  z-index: 1;
}

.doc-close {
  margin-left: auto;
  color: #6d6a68;
}

.doc-close svg {
  width: 9px;
  height: 9px;
}

/* ribbon */
.ribbon-tabs {
  display: flex;
  height: 24px;
  padding-left: 5px;
  background: #9dabc5;
}

.ribbon-tab {
  display: flex;
  align-items: center;
  gap: 2px;
  padding: 2px 13px 0;
  font-weight: bold;
  color: #4c5b75;
}

.ribbon-tab.active {
  height: 26px;
  padding: 0 12px;
  color: var(--ink);
  background: #c1cbdd;
  border: 1px solid #b0bdd2;
  border-bottom: none;
}

.ribbon {
  display: flex;
  height: 89px;
  border-bottom: 1px solid var(--line);
  background: linear-gradient(#c2ccde, #b9c4d8);
}

.group {
  display: flex;
  flex-direction: column;
  border-right: 1px solid #a9b6cb;
  box-shadow: 1px 0 #ccd5e4;
}

.g-daten { width: 171px; }
.g-infos { width: 145px; }
.g-bearbeiten { width: 413px; }
.g-bestell { width: 212px; }
.g-liefer { width: 413px; }
.g-drucken { width: 84px; }
.g-fenster { width: 81px; }
.g-hilfe { width: 50px; }
.g-beenden { width: 86px; }

.group-body {
  flex: 1;
  display: flex;
  justify-content: space-between;
  padding: 3px 2px 0;
}

.group-body.center {
  justify-content: center;
}

.group-title {
  height: 17px;
  line-height: 19px;
  padding-right: 8px;
  text-align: center;
  color: #8290a8;
  background:
    linear-gradient(135deg, transparent 50%, #8391a8 50%) right 4px bottom 3px / 6px 6px no-repeat,
    linear-gradient(#b2bdd4, #b7c2d6);
}

.big {
  display: flex;
  flex-direction: column;
  align-items: center;
  gap: 5px;
  padding-top: 1px;
  min-width: 44px;
  white-space: nowrap;
}

.w48 { width: 48px; }
.w64 { width: 64px; }
.w68 { width: 68px; }
.w88 { width: 88px; }
.w120 { width: 120px; }

.stack {
  flex: 1;
  padding-left: 7px;
}

.g-bearbeiten .stack {
  padding-left: 11px;
}

.g-daten .group-body {
  padding-right: 5px;
}

.small {
  display: flex;
  align-items: center;
  gap: 4px;
  height: 20px;
  margin-bottom: 3px;
  white-space: nowrap;
}

.stack.two {
  padding: 8px 0 0 5px;
  min-width: 0;
}

.two .small {
  gap: 3px;
  margin-bottom: 10px;
}

.divider {
  width: 1px;
  margin: 2px 1px 4px;
  background: linear-gradient(transparent, #98a6bd 30%, #98a6bd 70%, transparent);
}

/* module area */
.module {
  flex: 1;
  min-height: 0;
  display: flex;
}

.module-strip {
  width: 23px;
  padding: 12px 6px;
}

.module-main {
  flex: 1;
  min-width: 0;
  display: flex;
  flex-direction: column;
  padding: 2px 3px 0;
}

.module-frame {
  flex: 1;
  min-height: 0;
  display: flex;
  flex-direction: column;
  padding: 0 3px 6px;
  border-left: 1px solid var(--line);
  border-right: 2px solid var(--line);
}

.toolbar {
  display: flex;
  align-items: center;
  gap: 3px;
  height: 29px;
  padding: 0 1px 0 2px;
  border-bottom: 2px solid var(--line);
}

.path-box {
  flex: 1;
  position: relative;
  margin-right: 4px;
}

.path-select {
  display: block;
  width: 100%;
  height: 20px;
  padding: 0 4px;
  appearance: none;
  border: 1px solid #8d9cb5;
  border-radius: 0;
  background: #fff;
  color: #111;
  font: inherit;
}

.path-box .caret {
  position: absolute;
  top: 8px;
  right: 4px;
  pointer-events: none;
}

.tool {
  display: flex;
  align-items: center;
  justify-content: center;
  width: 22px;
  height: 22px;
  border: 1px solid #8e9db6;
  background: linear-gradient(#f6f8fb, #dce2ec);
}

.tool-split {
  display: flex;
}

.tool-split .tool {
  width: 26px;
}

.tool-split .tool.narrow {
  width: 17px;
  margin-left: -1px;
}

.title-row {
  display: flex;
  align-items: center;
  gap: 8px;
  height: 26px;
  margin: 4px 0;
  padding: 0 3px 0 9px;
  background: linear-gradient(90deg, #c3cde0, #d4deee 8%, #c8d1e3 20%);
  color: #a3aec2;
  font-weight: bold;
}

.title-row .ico {
  margin-right: -2px;
}

.title-row .tool {
  margin-left: -4px;
}

.title-row .tool .ico {
  margin: 0;
}

.timer {
  margin-left: auto;
  font-weight: normal;
}

.content {
  flex: 1;
  min-height: 0;
  display: flex;
  flex-direction: column;
  gap: 8px;
  padding: 4px 6px 4px 5px;
  border: 1px solid var(--line);
}

.overview {
  display: grid;
  grid-template-columns: 2fr 10fr 3fr;
  grid-template-rows: 198px 33px;
  gap: 7px 8px;
}

.panel {
  display: flex;
  flex-direction: column;
  min-width: 0;
  background: #fff;
  border: 1px solid #a6b4ca;
}

.panel-title {
  display: flex;
  flex: none;
  align-items: center;
  height: 28px;
  padding: 2px 4px 0 5px;
  background: linear-gradient(#eaeef5, #e0e5ef);
  border-bottom: 1px solid #c3ccda;
}

.panel-title.slim {
  height: 26px;
  padding-top: 0;
}

.panel-ico {
  width: 15px;
  height: 15px;
  margin-left: auto;
  color: #454c5a;
}

.muted {
  color: #bfc6d2;
}

.status-item {
  display: flex;
  align-items: center;
  height: 17px;
  padding-left: 2px;
}

.status-item.selected {
  background: #ffe7a3;
  box-shadow: inset 0 0 0 1px #ecc878;
}

.status-item input {
  appearance: none;
  width: 14px;
  height: 14px;
  margin: 0 6px 0 0;
  border: 1px solid #c3cad6;
  background: linear-gradient(#e2e6ec, #f8f9fb);
}

.status-item input:checked::before {
  content: "";
  display: block;
  width: 4px;
  height: 8px;
  margin: 0 auto;
  border: solid #15181f;
  border-width: 0 2px 2px 0;
  transform: rotate(35deg);
}

/* phases chart */
.chart {
  flex: 1;
  display: grid;
  grid-template-columns: repeat(7, 1fr);
  margin: 10px;
  border: 1px solid #a9abb0;
  overflow: hidden;
}

.bar-slot {
  display: flex;
  justify-content: center;
  position: relative;
  padding-top: 12px;
  color: var(--c);
}

.bar {
  width: 61%;
  background: var(--c);
  filter: brightness(1.1);
}

.bar-label {
  position: absolute;
  z-index: 1;
  top: 72px;
  left: 50%;
  transform: translateX(-50%);
  height: 16px;
  padding: 0 4px;
  border: 1px solid var(--c);
  background: #fff;
  white-space: nowrap;
}

.bar-label.high {
  top: 57px;
}

.bar-label.at-start {
  left: 0;
  padding-left: 2px;
  transform: none;
  border-left: none;
}

.bar-label.at-end {
  left: auto;
  right: 0;
  transform: none;
  border-right: none;
}

.brown { --c: #9f7e4b; }
.purple { --c: #72607f; }
.indigo { --c: #556087; }
.green { --c: #7a8a5e; }
.teal { --c: #56808a; }
.red { --c: #a84449; }
.plum { --c: #855564; }

.documents {
  grid-column: 3;
  grid-row: 1 / 3;
}

.legend {
  grid-column: 1 / 3;
  flex-direction: row;
  align-items: center;
  justify-content: center;
  gap: 57px;
  padding-left: 38px;
  color: #222;
  font-family: "Open Sans", sans-serif;
  font-size: 16px;
  line-height: 24px;
}

.legend span {
  display: flex;
  align-items: center;
  gap: 4px;
}

.legend .ico {
  width: 15px;
  height: 15px;
}

.flag-dark {
  color: #3f9d2f;
}

/* tables */
table {
  width: 100%;
  table-layout: fixed;
  border-collapse: separate;
  border-spacing: 0;
}

th {
  height: 21px;
  padding: 0 0 0 3px;
  overflow: hidden;
  text-align: left;
  font-weight: normal;
  white-space: nowrap;
  color: #4c5a74;
  background: linear-gradient(#eceff4, #dce1e9);
  border-right: 1px solid #bcc5d3;
  border-bottom: 1px solid #bcc5d3;
}

.doc-table th:last-child {
  border-right: none;
}

.d-pos { width: 73px; }
.d-date { width: 37px; }
.d-dots { width: 26px; }
.d-b { width: 30px; }

.details {
  flex: 1;
  min-height: 0;
  position: relative;
}

.details .panel-title {
  height: 26px;
}

.grid-wrap {
  flex: 1;
  min-height: 0;
  display: flex;
}

.grid-clip {
  flex: 1;
  min-width: 0;
  overflow: hidden;
}

.c-name { width: 122px; }
.c-order { width: 64px; }
.c-state { width: 37px; }
.c-desc { width: 226px; }
.c-art { width: 107px; }
.c-s1 { width: 96px; }
.c-s2 { width: 156px; }
.c-s3 { width: 156px; }
.c-s4 { width: 151px; }
.c-s5 { width: 140px; }
.c-s6 { width: 137px; }
.c-s7 { width: 124px; }
.c-s8 { width: 105px; }
.c-s9 { width: 100px; }
.c-s10 { width: 104px; }

td {
  padding: 2px 0 0 4px;
  vertical-align: top;
  border-right: 1px solid #d7dbe3;
  border-bottom: 1px solid #d7dbe3;
}

.order-row { height: 31px; }
.h-mid { height: 71px; }
.h-tall { height: 109px; }
.h-large { height: 83px; }
.h-last { height: 42px; }

.order-row td {
  background: #d8d8d8;
  border-color: #dedede;
}

.order-row .count {
  padding-right: 3px;
  text-align: right;
  color: #fff;
}

.grid .sub {
  padding-left: 22px;
}

.grid .state {
  padding: 0 0 0 4px;
  vertical-align: middle;
}

.done {
  background: #d0e1a9;
  color: #1c3a38;
}

.empty {
  background: #f1f1f1;
}

.grid .mid {
  padding: 0 4px 0 3px;
  vertical-align: middle;
}

.step {
  display: flex;
  align-items: center;
  justify-content: space-between;
  white-space: nowrap;
}

.step span {
  min-width: 0;
}

.flag {
  width: 15px;
  height: 15px;
  color: #83bd45;
}

.scrollbar {
  width: 17px;
  display: flex;
  flex-direction: column;
  align-items: center;
  background: #edf0f4;
  color: #7c8798;
}

.scroll-head {
  width: 100%;
  height: 21px;
  background: linear-gradient(#eceff4, #dce1e9);
  border-bottom: 1px solid #bcc5d3;
}

.scroll-arrow {
  width: 7px;
  height: 4px;
  margin: 6px 0 7px;
}

.scroll-arrow.last {
  margin: auto 0 6px;
}

.thumb {
  width: 14px;
  height: 52px;
  padding-top: 21px;
  border: 1px solid #97a5bb;
  background: linear-gradient(90deg, #f7f9fc, #d3dbe8);
}

.thumb i {
  display: block;
  width: 8px;
  height: 8px;
  margin: 0 auto;
  background: repeating-linear-gradient(#6b7a93 0 1px, transparent 1px 3px);
}

/* context menu */
.menu {
  position: absolute;
  padding: 1px;
  border: 1px solid #8e9cb4;
  font-family: "Open Sans", sans-serif;
}

.context-menu {
  top: 103px;
  left: calc(51% - 5px);
  width: 243px;
  background: linear-gradient(90deg, rgba(240, 243, 248, 0.7) 30px, transparent 30px), linear-gradient(#edf0f5, #ced6e5);
}

.menu button {
  display: flex;
  align-items: center;
  gap: 12px;
  width: 100%;
  height: 24px;
  padding: 0 10px 0 4px;
  white-space: nowrap;
}

.menu hr {
  height: 3px;
  margin: 0 4px 0 36px;
  border: none;
  background: linear-gradient(#0000 1px, #a8b3c5 1px 2px, #0000 2px);
}

.menu .hot {
  border: 1px solid #e3c06f;
  border-radius: 2px;
  background: linear-gradient(#fff9e6, #fef0c4 48%, #fde295 50%, #fdeab0);
}

.more {
  width: 5px;
  height: 8px;
  margin-left: auto;
}

.menu.sub-menu {
  top: 178px;
  left: 242px;
  width: 296px;
  background: linear-gradient(#edf0f5, #ced6e5);
}

.sub-menu button {
  padding-left: 32px;
}

/* bottom tabs */
.bottom-tabs {
  display: flex;
  align-items: flex-start;
  gap: 1px;
  height: 27px;
  padding-left: 2px;
}

.bottom-tab {
  display: flex;
  align-items: center;
  gap: 3px;
  height: 24px;
  padding: 0 10px 2px 8px;
  border: 1px solid #98a5ba;
  border-top: none;
  background: linear-gradient(#c9d2e0, #f0f3f7);
}

.bottom-tab.first {
  padding-right: 20px;
}

.bottom-tab.active {
  padding: 0 8px 2px 7px;
  font-weight: bold;
  background: linear-gradient(#fbe4a4, #fff8e2);
}
```
